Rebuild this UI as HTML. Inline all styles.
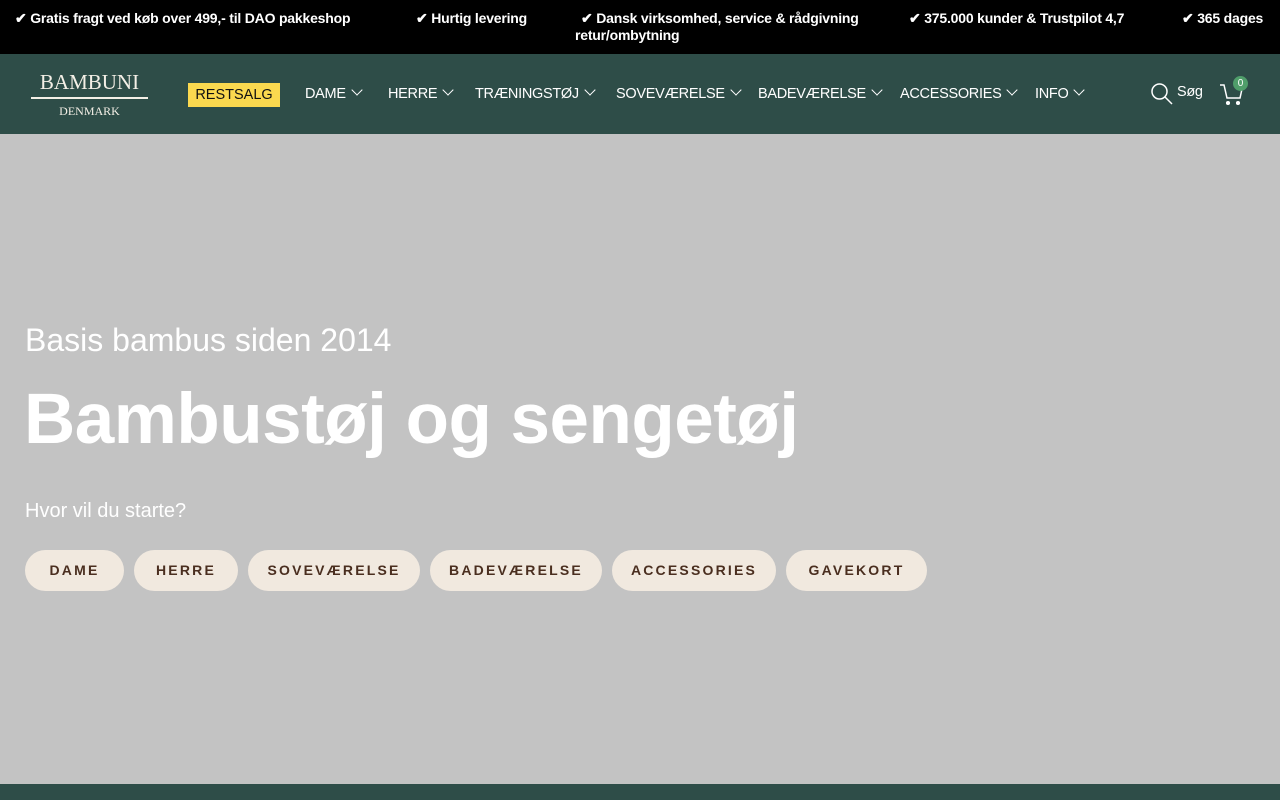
<!DOCTYPE html>
<html><head><meta charset="utf-8"><style>
*{margin:0;padding:0;box-sizing:border-box}
body{width:1280px;height:800px;overflow:hidden;font-family:"Liberation Sans",sans-serif;background:#c3c3c3;position:relative}
.top{position:absolute;left:0;top:0;width:1280px;height:54px;background:#000;color:#fff;font-weight:bold;font-size:14px}
.top span{position:absolute;white-space:nowrap;letter-spacing:-0.2px}
.nav{position:absolute;left:0;top:54px;width:1280px;height:80px;background:#2e4d48;color:#fff}
.nav .it{position:absolute;top:32px;font-size:14.5px;white-space:nowrap;letter-spacing:-0.3px}
.chev{display:inline-block;width:8px;height:8px;border-right:1.3px solid #fff;border-bottom:1.3px solid #fff;transform:rotate(45deg);margin-left:7px;position:relative;top:-4px}
.rest{position:absolute;left:188px;top:29px;width:92px;height:24px;background:#fbd94f;color:#111;font-size:14.5px;text-align:center;line-height:24px}
.logo{position:absolute;left:31px;top:17px;width:117px;color:#f3efe6;font-family:"Liberation Serif",serif;text-align:center}
.h{position:absolute;color:#fff;white-space:nowrap}
.btn{position:absolute;top:550px;height:41px;border-radius:21px;background:#f1e9df;color:#4a2e1f;font-weight:bold;font-size:14px;letter-spacing:2.2px;text-align:center;line-height:41px}
.foot{position:absolute;left:0;top:784px;width:1280px;height:16px;background:#2e4d48}
</style></head><body>
<div class="top">
<span style="left:15px;top:10px">✔ Gratis fragt ved køb over 499,- til DAO pakkeshop</span>
<span style="left:416px;top:10px">✔ Hurtig levering</span>
<span style="left:581px;top:10px">✔ Dansk virksomhed, service &amp; rådgivning</span>
<span style="left:575px;top:27px">retur/ombytning</span>
<span style="left:909px;top:10px">✔ 375.000 kunder &amp; Trustpilot 4,7</span>
<span style="left:1182px;top:10px">✔ 365 dages</span>
</div>
<div class="nav">
<div class="logo"><div style="font-size:21px;line-height:22px">BAMBUNI</div><div style="height:2px;background:#f3efe6;margin:4px 0 5px"></div><div style="font-size:12px">DENMARK</div></div>
<div class="rest">RESTSALG</div>
<div class="it" style="left:305px">DAME<i class="chev"></i></div>
<div class="it" style="left:388px">HERRE<i class="chev"></i></div>
<div class="it" style="left:475px">TRÆNINGSTØJ<i class="chev"></i></div>
<div class="it" style="left:616px">SOVEVÆRELSE<i class="chev"></i></div>
<div class="it" style="left:758px">BADEVÆRELSE<i class="chev"></i></div>
<div class="it" style="left:900px">ACCESSORIES<i class="chev"></i></div>
<div class="it" style="left:1035px">INFO<i class="chev"></i></div>
<svg style="position:absolute;left:1150px;top:28px" width="24" height="24" viewBox="0 0 24 24" fill="none" stroke="#fff" stroke-width="1.5"><circle cx="9.5" cy="9.5" r="7.5"/><path d="M15 15l7 7"/></svg>
<div class="it" style="left:1177px;top:30px">Søg</div>
<svg style="position:absolute;left:1219px;top:28px" width="26" height="26" viewBox="0 0 26 26" fill="none" stroke="#fff" stroke-width="1.5"><path d="M1 3h4l3 13h13l2-9"/><circle cx="9" cy="21" r="1.3" fill="#fff"/><circle cx="19" cy="21" r="1.3" fill="#fff"/></svg>
<div style="position:absolute;left:1233px;top:22px;width:15px;height:15px;border-radius:50%;background:#4f9e6a;color:#fff;font-size:10px;text-align:center;line-height:15px">0</div>
</div>
<div class="h" style="left:25px;top:322px;font-size:32px">Basis bambus siden 2014</div>
<div class="h" style="left:24px;top:379px;font-size:71px;font-weight:bold;letter-spacing:-0.5px">Bambustøj og sengetøj</div>
<div class="h" style="left:25px;top:500px;font-size:20px">Hvor vil du starte?</div>
<div class="btn" style="left:25px;width:99px">DAME</div>
<div class="btn" style="left:134px;width:104px">HERRE</div>
<div class="btn" style="left:248px;width:172px">SOVEVÆRELSE</div>
<div class="btn" style="left:430px;width:172px">BADEVÆRELSE</div>
<div class="btn" style="left:612px;width:164px">ACCESSORIES</div>
<div class="btn" style="left:786px;width:141px">GAVEKORT</div>
<div class="foot"></div>
</body></html>
